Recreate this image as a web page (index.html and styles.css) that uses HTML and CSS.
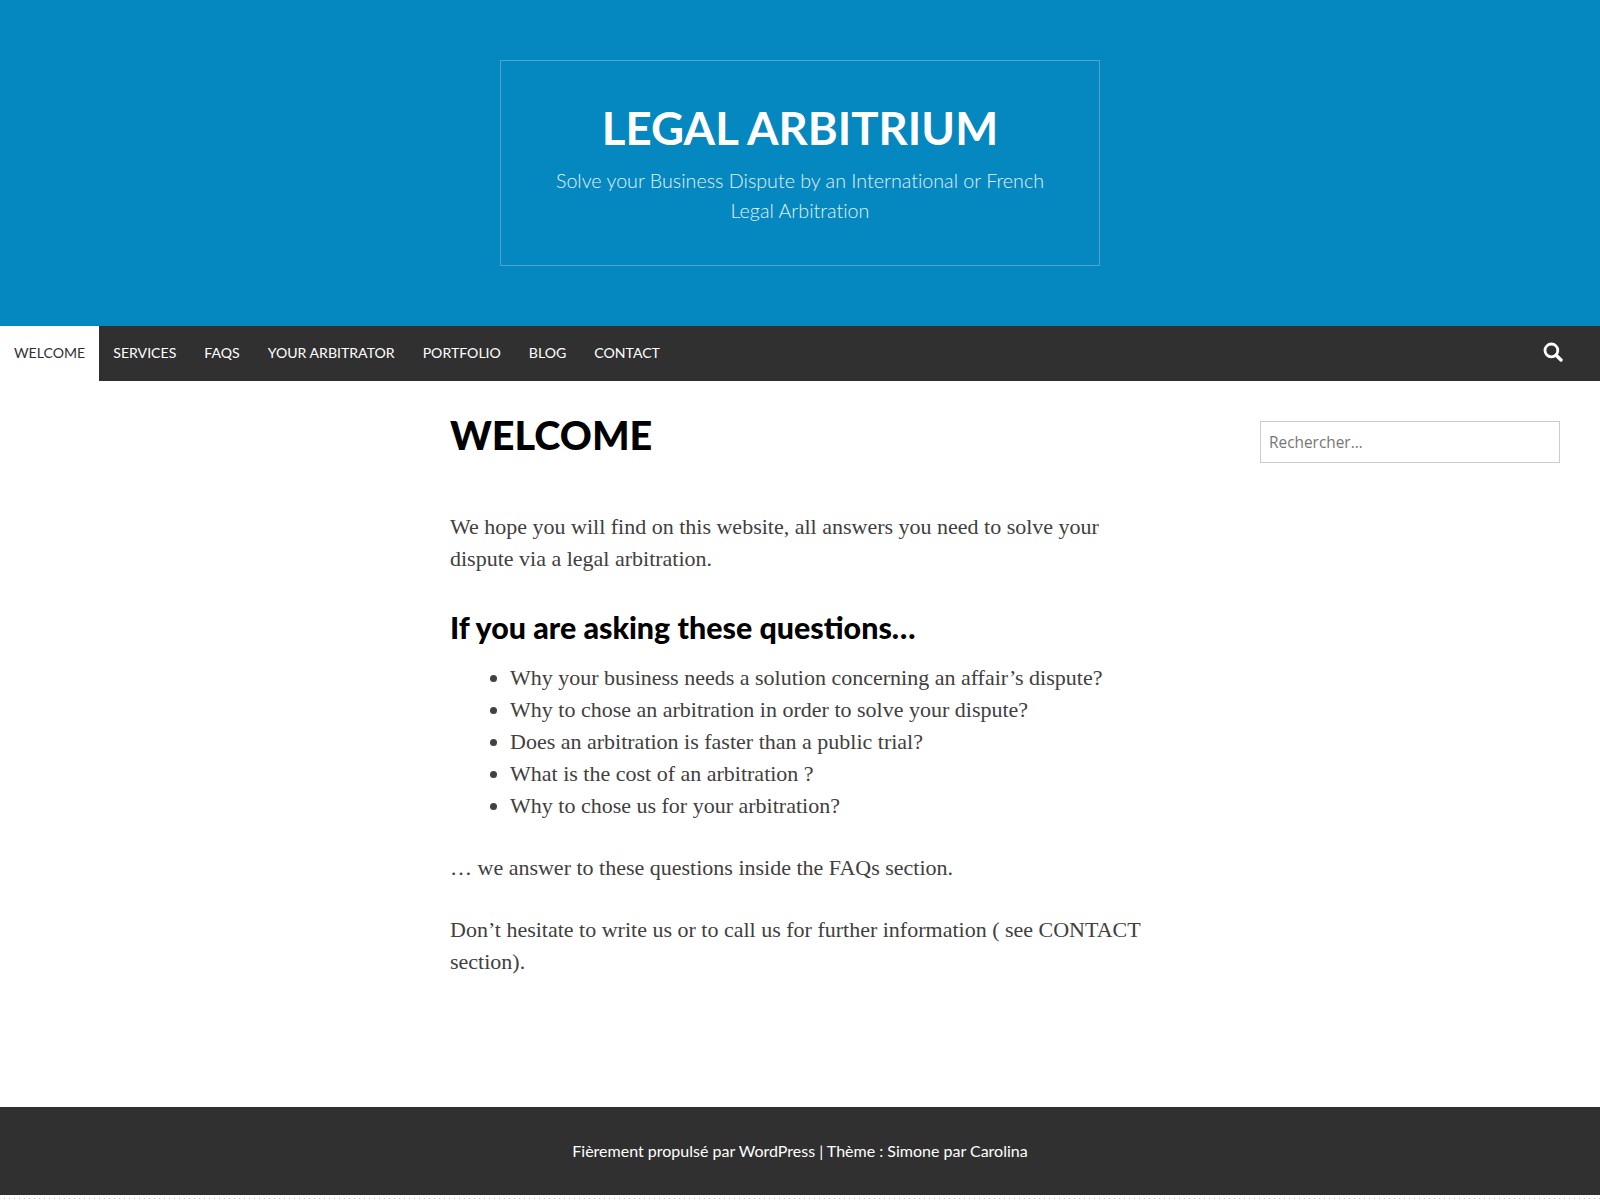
FILE: index.html
```html
<!DOCTYPE html>
<html>
<head>
    <meta charset="UTF-8">
    <title>Legal Arbitrium</title>
    <link rel="stylesheet" href="styles.css">
</head>
<body>

<header class="site-header">
    <div class="branding">
        <h1 class="site-title">LEGAL ARBITRIUM</h1>
        <p class="site-desc">Solve your Business Dispute by an International or French Legal Arbitration</p>
    </div>
</header>

<nav class="main-nav">
    <ul class="menu">
        <li class="current"><a href="#">Welcome</a></li>
        <li><a href="#">Services</a></li>
        <li><a href="#">FAQs</a></li>
        <li><a href="#">Your Arbitrator</a></li>
        <li><a href="#">Portfolio</a></li>
        <li><a href="#">Blog</a></li>
        <li><a href="#">Contact</a></li>
    </ul>
    <a class="search-toggle" href="#" aria-label="Search">
        <svg width="20" height="20" viewBox="0 0 20 20">
            <circle cx="8.4" cy="8.4" r="6.4" fill="none" stroke="#fff" stroke-width="2.8"/>
            <path d="M13.2 13.2 L18 18" stroke="#fff" stroke-width="3.4" stroke-linecap="round"/>
        </svg>
    </a>
</nav>

<div class="page">
    <main class="content">
        <h1 class="entry-title">WELCOME</h1>
        <p>We hope you will find on this website, all answers you need to solve your dispute via a legal arbitration.</p>
        <h2>If you are asking these questions…</h2>
        <ul class="questions">
            <li>Why your business needs a solution concerning an affair’s dispute?</li>
            <li>Why to chose an arbitration in order to solve your dispute?</li>
            <li>Does an arbitration is faster than a public trial?</li>
            <li>What is the cost of an arbitration ?</li>
            <li>Why to chose us for your arbitration?</li>
        </ul>
        <p>… we answer to these questions inside the FAQs section.</p>
        <p>Don’t hesitate to write us or to call us for further information ( see CONTACT section).</p>
    </main>
    <aside class="sidebar">
        <input class="search-field" type="search" placeholder="Rechercher…">
    </aside>
</div>

<footer class="site-footer">
    Fièrement propulsé par WordPress | Thème : Simone par Carolina
</footer>
<div class="dots"></div>

</body>
</html>
```

FILE: styles.css
```css
* {
    box-sizing: border-box;
}
body {
    margin: 0;
    background-color: #fff;
    color: #404040;
    font-family: "Liberation Serif", serif;
    font-size: 22px;
    line-height: 32px;
}
a {
    color: inherit;
    text-decoration: none;
}
.site-header {
    height: 326px;
    padding-top: 60px;
    background-color: #0587bf;
}
.branding {
    width: 600px;
    height: 206px;
    margin: 0 auto;
    padding: 39px 50px 0;
    border: 1px solid #4ea6cf;
    text-align: center;
    font-family: Lato, sans-serif;
}
.site-title {
    margin: 0;
    color: #fff;
    font-size: 45.5px;
    font-weight: 700;
    line-height: 55px;
}
.site-desc {
    margin: 11px 0 0;
    color: #e2f2f9;
    font-size: 19.7px;
    font-weight: 300;
    font-variant-ligatures: none;
    line-height: 30px;
}
.main-nav {
    display: flex;
    justify-content: space-between;
    align-items: center;
    height: 55px;
    background-color: #303030;
    font-family: Lato, sans-serif;
}
.menu {
    display: flex;
    margin: 0;
    padding: 0;
    list-style: none;
    font-size: 14.1px;
    text-transform: uppercase;
}
.menu a {
    display: block;
    padding: 0 14px 1px;
    color: #fff;
    line-height: 54px;
}
.menu .current a {
    background-color: #fff;
    color: #303030;
}
.search-toggle {
    display: flex;
    margin: 0 37px 3px 0;
}
.page {
    display: flex;
    height: 726px;
    padding: 40px 40px 0 450px;
}
.content {
    width: 700px;
}
.entry-title {
    margin: 0 0 62px;
    color: #000;
    font-family: Lato, sans-serif;
    font-size: 39.6px;
    font-weight: 900;
    line-height: 28px;
}
.content p {
    margin: 0 0 30px;
}
.content h2 {
    margin: 32px 0 15px;
    color: #000;
    font-family: Lato, sans-serif;
    font-size: 30.4px;
    font-weight: 900;
    line-height: 40px;
}
.questions {
    margin: 0 0 30px;
    padding-left: 60px;
}
.sidebar {
    width: 300px;
    margin-left: auto;
}
.search-field {
    display: block;
    width: 100%;
    height: 42px;
    padding: 0 8px;
    border: 1px solid #ccc;
    outline: none;
    color: #666;
    font-family: "Open Sans", sans-serif;
    font-size: 15.4px;
}
.search-field::placeholder {
    color: #777;
}
.site-footer {
    height: 88px;
    background-color: #303030;
    color: #fff;
    text-align: center;
    font-family: Lato, sans-serif;
    font-size: 16px;
    line-height: 88px;
}
.dots {
    height: 1px;
    margin-top: 3px;
    background-image: repeating-linear-gradient(to right, transparent 0, transparent 4px, #bbb 4px, #bbb 5px);
}
```
